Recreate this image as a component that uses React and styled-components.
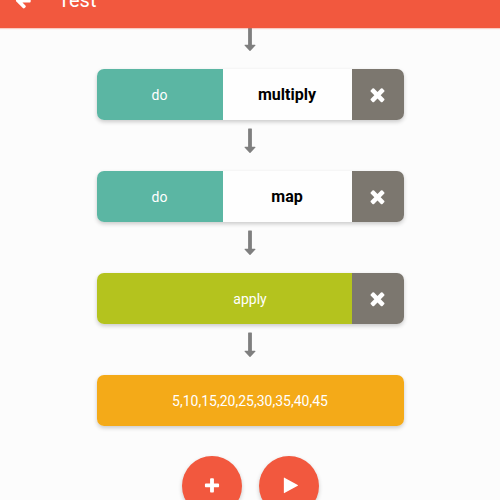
import React from "react";
import styled, { createGlobalStyle } from "styled-components";

const GlobalStyle = createGlobalStyle`
  *, *::before, *::after { box-sizing: border-box; }
  body {
    margin: 0;
    background: #fcfcfc;
    font-family: Roboto, "Liberation Sans", sans-serif;
    overflow-x: hidden;
  }
  button { font: inherit; border: 0; padding: 0; margin: 0; cursor: pointer; }
`;

const Header = styled.header`
  position: relative;
  z-index: 1;
  display: flex;
  align-items: center;
  gap: 26px;
  height: 56px;
  margin-top: -28px;
  padding: 0 14px;
  background: #f2583e;
  color: #fff;
  box-shadow: 0 1px 1px rgba(242, 88, 62, 0.3);
`;

const BackButton = styled.button`
  display: flex;
  background: none;
  color: inherit;
`;

const Title = styled.h1`
  margin: 0;
  font-size: 20px;
  line-height: 24px;
  font-weight: 400;
`;

const Flow = styled.main`
  display: flex;
  flex-direction: column;
  align-items: center;
  margin-top: -10px;
`;

const Connector = styled.div`
  display: flex;
  height: 51px;
  padding-top: 8px;
  color: #7f7f7f;
`;

const Card = styled.section`
  display: flex;
  width: 61.4%;
  height: 51px;
  border-radius: 7px;
  overflow: hidden;
  background: #fff;
  box-shadow: 0 2px 4px rgba(0, 0, 0, 0.2);
`;

const Action = styled.button`
  flex: 126 1 0;
  background: #5bb6a3;
  color: #fff;
  font-size: 14px;
`;

const FunctionName = styled.button`
  flex: 129 1 0;
  background: #fefefe;
  color: #000;
  font-size: 16px;
  font-weight: 700;
`;

const Apply = styled.button`
  flex: 1;
  padding-left: 52px;
  background: #b4c31e;
  color: #fff;
  font-size: 14px;
`;

const Remove = styled.button`
  display: flex;
  flex: 0 0 52px;
  align-items: center;
  justify-content: center;
  background: #7c776f;
  color: #fff;
`;

const Result = styled.output`
  display: flex;
  flex: 1;
  align-items: center;
  justify-content: center;
  background: #f4aa18;
  color: #fff;
  font-size: 14px;
`;

const Actions = styled.div`
  display: flex;
  gap: 17px;
  margin-top: 30px;
`;

const RoundButton = styled.button`
  display: flex;
  align-items: center;
  justify-content: center;
  width: 60px;
  height: 60px;
  border-radius: 50%;
  background: #f2583e;
  color: #fff;
  box-shadow: 0 2px 4px rgba(0, 0, 0, 0.2);
`;

const icons = {
  times: {
    box: "0 0 1792 1792",
    path: "M1490 1322q0 40-28 68l-136 136q-28 28-68 28t-68-28l-294-294-294 294q-28 28-68 28t-68-28l-136-136q-28-28-28-68t28-68l294-294-294-294q-28-28-28-68t28-68l136-136q28-28 68-28t68 28l294 294 294-294q28-28 68-28t68 28l136 136q28 28 28 68t-28 68l-294 294 294 294q28 28 28 68z",
  },
  plus: {
    box: "0 0 1792 1792",
    path: "M1600 736v192q0 40-28 68t-68 28h-416v416q0 40-28 68t-68 28h-192q-40 0-68-28t-28-68v-416h-416q-40 0-68-28t-28-68v-192q0-40 28-68t68-28h416v-416q0-40 28-68t68-28h192q40 0 68 28t28 68v416h416q40 0 68 28t28 68z",
  },
  play: {
    box: "-192 64 1792 1792",
    path: "M1576 927l-1328 738q-23 13-39.500 3t-16.500-36v-1472q0-26 16.500-36t39.500 3l1328 738q23 13 23 31t-23 31z",
  },
  back: {
    box: "0 0 1792 1792",
    path: "M1664 896v128q0 53-32.500 90.500t-84.500 37.500h-704l293 294q38 36 38 90t-38 90l-75 76q-37 37-90 37-52 0-91-37l-651-652q-37-37-37-90 0-52 37-91l651-650q38-38 91-38 52 0 90 38l75 74q38 38 38 91t-38 91l-293 293h704q52 0 84.500 37.500t32.500 90.500z",
  },
};

const Icon = ({ name, size }) => (
  <svg width={size} height={size} viewBox={icons[name].box} fill="currentColor" aria-hidden="true">
    <path d={icons[name].path} />
  </svg>
);

const DownArrow = () => (
  <Connector>
    <svg width="12" height="26" viewBox="0 0 12 26" fill="currentColor" aria-hidden="true">
      <path d="M4.100 1q0-.5.5-.5h2.800q.5 0 .5.5v17.800h3.100q.9 0 .4.800l-4.900 5.200q-.5.400-1 0L.6 19.600q-.5-.8.4-.8h3.100z" />
    </svg>
  </Connector>
);

const RemoveButton = ({ label }) => (
  <Remove type="button" aria-label={label}>
    <Icon name="times" size={21} />
  </Remove>
);

const FunctionCard = ({ name }) => (
  <Card>
    <Action type="button">do</Action>
    <FunctionName type="button">{name}</FunctionName>
    <RemoveButton label={`Remove ${name}`} />
  </Card>
);

export default function App() {
  return (
    <>
      <GlobalStyle />
      <Header>
        <BackButton type="button" aria-label="Back">
          <Icon name="back" size={18} />
        </BackButton>
        <Title>Test</Title>
      </Header>
      <Flow>
        <DownArrow />
        <FunctionCard name="multiply" />
        <DownArrow />
        <FunctionCard name="map" />
        <DownArrow />
        <Card>
          <Apply type="button">apply</Apply>
          <RemoveButton label="Remove apply" />
        </Card>
        <DownArrow />
        <Card>
          <Result>5,10,15,20,25,30,35,40,45</Result>
        </Card>
        <Actions>
          <RoundButton type="button" aria-label="Add step">
            <Icon name="plus" size={18} />
          </RoundButton>
          <RoundButton type="button" aria-label="Run">
            <Icon name="play" size={18} />
          </RoundButton>
        </Actions>
      </Flow>
    </>
  );
}
